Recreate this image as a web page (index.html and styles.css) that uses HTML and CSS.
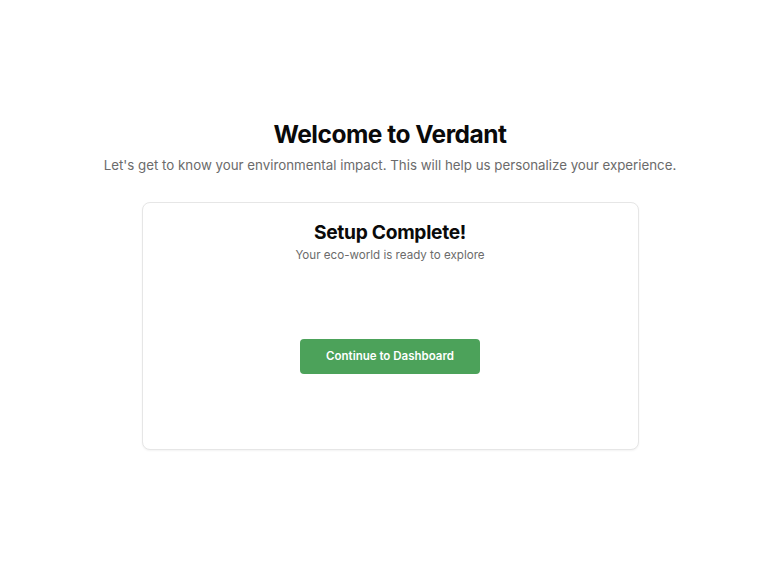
FILE: index.html
```html
<!DOCTYPE html>
<html lang="en">
<head>
<meta charset="utf-8">
<title>Welcome to Verdant</title>
<link rel="stylesheet" href="styles.css">
</head>
<body>
<main class="page">
  <header class="intro">
    <h1 class="intro-title">Welcome to Verdant</h1>
    <p class="intro-text">Let's get to know your environmental impact. This will help us personalize your experience.</p>
  </header>
  <section class="card">
    <div class="card-head">
      <h2 class="card-title">Setup Complete!</h2>
      <p class="card-text">Your eco-world is ready to explore</p>
    </div>
    <div class="card-body">
      <button class="btn-primary" type="button">Continue to Dashboard</button>
    </div>
  </section>
</main>
</body>
</html>
```

FILE: styles.css
```css
* { box-sizing: border-box; }
html, body { margin: 0; padding: 0; }
body {
  font-family: Inter, "Noto Sans", sans-serif;
  background: #ffffff;
  color: #0a0a0a;
}
.page {
  min-height: 100vh;
  display: flex;
  flex-direction: column;
  align-items: center;
  justify-content: center;
  padding: 0 16px 5px 19px;
}
.intro {
  text-align: center;
  margin-bottom: 27px;
}
.intro-title {
  margin: 0;
  font-size: 24.5px;
  line-height: 30px;
  font-weight: 700;
  letter-spacing: -0.5px;
}
.intro-text {
  margin: 6px 0 0;
  font-size: 13.3px;
  line-height: 20px;
  color: #6b6b6b;
}
.card {
  width: 497px;
  border: 1px solid #e6e6e6;
  border-radius: 8px;
  box-shadow: 0 1px 2px rgba(0,0,0,0.05);
  background: #fff;
  padding: 17px 24px 0;
}
.card-head { text-align: center; }
.card-title {
  margin: 0;
  font-size: 19.2px;
  line-height: 24px;
  font-weight: 700;
  letter-spacing: -0.3px;
}
.card-text {
  margin: 3px 0 0;
  font-size: 11.6px;
  line-height: 16px;
  color: #6b6b6b;
}
.card-body {
  display: flex;
  justify-content: center;
  padding: 76px 0 75px;
}
.btn-primary {
  width: 180px;
  height: 35px;
  border: none;
  border-radius: 4px;
  background: #4ca25a;
  color: #fff;
  font-family: inherit;
  font-size: 11.5px;
  font-weight: 600;
}
```
